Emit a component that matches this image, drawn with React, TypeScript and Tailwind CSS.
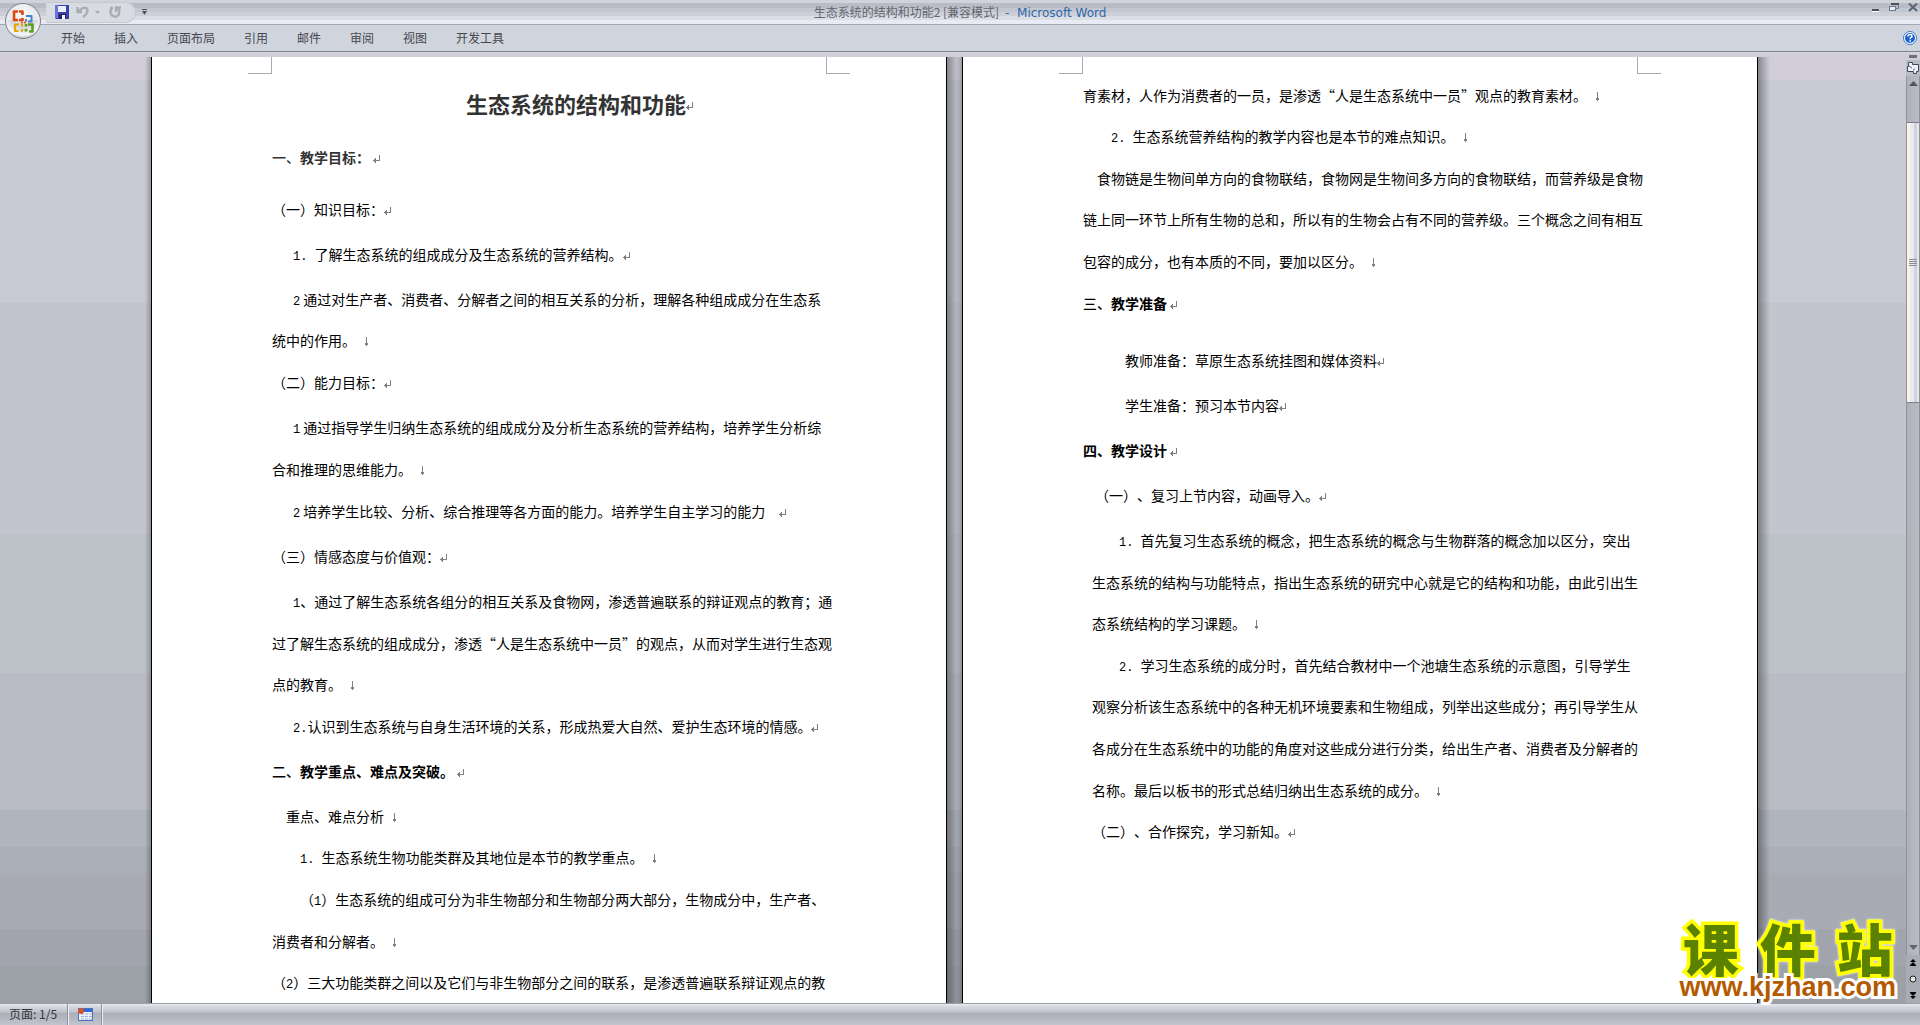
import React from "react";

const cjk = 'font-["Noto_Sans_CJK_SC",sans-serif]';

type Line = {
  text: string;
  lead?: string;
  indent?: string;
  space?: string;
  end?: "para" | "break";
  pad?: string;
  heading?: boolean;
  color?: string;
};

const PARA = "mt-1";
const NEXT = "mt-px";
const WIDE = "mt-3";

const pageOne: Line[] = [
  { lead: "一、", text: "教学目标：", end: "para", pad: "ml-[3px]", heading: true, space: WIDE, color: "text-[#333]" },
  { text: "（一）知识目标：", end: "para", space: "mt-[11px]" },
  { text: "1. 了解生态系统的组成成分及生态系统的营养结构。", indent: "pl-[21px]", end: "para", space: PARA },
  { text: "2通过对生产者、消费者、分解者之间的相互关系的分析，理解各种组成成分在生态系", indent: "pl-[21px]", space: PARA },
  { text: "统中的作用。", end: "break", pad: "ml-[7px]" },
  { text: "（二）能力目标：", end: "para", space: NEXT },
  { text: "1通过指导学生归纳生态系统的组成成分及分析生态系统的营养结构，培养学生分析综", indent: "pl-[21px]", space: PARA },
  { text: "合和推理的思维能力。", end: "break", pad: "ml-[7px]", space: NEXT },
  { text: "2培养学生比较、分析、综合推理等各方面的能力。培养学生自主学习的能力", indent: "pl-[21px]", end: "para", pad: "ml-[14px]", space: NEXT },
  { text: "（三）情感态度与价值观：", end: "para", space: PARA },
  { text: "1、通过了解生态系统各组分的相互关系及食物网，渗透普遍联系的辩证观点的教育；通", indent: "pl-[21px]", space: PARA },
  { text: "过了解生态系统的组成成分，渗透“人是生态系统中一员”的观点，从而对学生进行生态观", space: NEXT },
  { text: "点的教育。", end: "break", pad: "ml-[7px]" },
  { text: "2.认识到生态系统与自身生活环境的关系，形成热爱大自然、爱护生态环境的情感。", indent: "pl-[21px]", end: "para", space: NEXT },
  { lead: "二、", text: "教学重点、难点及突破。", end: "para", pad: "ml-[3px]", heading: true, space: PARA },
  { text: "重点、难点分析", indent: "pl-[14px]", end: "break", pad: "ml-[7px]", space: PARA },
  { text: "1. 生态系统生物功能类群及其地位是本节的教学重点。", indent: "pl-[28px]", end: "break", pad: "ml-[7px]" },
  { text: "（1）生态系统的组成可分为非生物部分和生物部分两大部分，生物成分中，生产者、", indent: "pl-[28px]", space: NEXT },
  { text: "消费者和分解者。", end: "break", pad: "ml-[7px]", space: NEXT },
  { text: "（2）三大功能类群之间以及它们与非生物部分之间的联系，是渗透普遍联系辩证观点的教" },
];

const pageTwo: Line[] = [
  { text: "育素材，人作为消费者的一员，是渗透“人是生态系统中一员”观点的教育素材。", end: "break", pad: "ml-[7px]" },
  { text: "2. 生态系统营养结构的教学内容也是本节的难点知识。", indent: "pl-[28px]", end: "break", pad: "ml-[7px]" },
  { text: "食物链是生物间单方向的食物联结，食物网是生物间多方向的食物联结，而营养级是食物", indent: "pl-[14px]", space: NEXT },
  { text: "链上同一环节上所有生物的总和，所以有的生物会占有不同的营养级。三个概念之间有相互" },
  { text: "包容的成分，也有本质的不同，要加以区分。", end: "break", pad: "ml-[7px]", space: NEXT },
  { lead: "三、", text: "教学准备", end: "para", pad: "ml-[3px]", heading: true, space: NEXT },
  { text: "教师准备：草原生态系统挂图和媒体资料", indent: "pl-[42px]", end: "para", space: "mt-4" },
  { text: "学生准备：预习本节内容", indent: "pl-[42px]", end: "para", space: PARA },
  { text: "四、教学设计", end: "para", pad: "ml-[3px]", heading: true, space: PARA },
  { text: "（一）、复习上节内容，动画导入。", indent: "pl-[12px]", end: "para", space: PARA },
  { text: "1. 首先复习生态系统的概念，把生态系统的概念与生物群落的概念加以区分，突出", indent: "pl-[36px]", space: PARA },
  { text: "生态系统的结构与功能特点，指出生态系统的研究中心就是它的结构和功能，由此引出生", indent: "pl-[9px]", space: NEXT },
  { text: "态系统结构的学习课题。", indent: "pl-[9px]", end: "break", pad: "ml-[7px]" },
  { text: "2. 学习生态系统的成分时，首先结合教材中一个池塘生态系统的示意图，引导学生", indent: "pl-[36px]", space: NEXT },
  { text: "观察分析该生态系统中的各种无机环境要素和生物组成，列举出这些成分；再引导学生从", indent: "pl-[9px]" },
  { text: "各成分在生态系统中的功能的角度对这些成分进行分类，给出生产者、消费者及分解者的", indent: "pl-[9px]", space: NEXT },
  { text: "名称。最后以板书的形式总结归纳出生态系统的成分。", indent: "pl-[9px]", end: "break", pad: "ml-[7px]", space: NEXT },
  { text: "（二）、合作探究，学习新知。", indent: "pl-[9px]", end: "para" },
];

function ParaMark() {
  return (
    <svg width="7" height="8" viewBox="0 0 7 8" className="inline-block shrink-0" aria-hidden="true" shapeRendering="crispEdges">
      <path d="M6.5 0V5.5H1" stroke="#808080" fill="none" />
      <path d="M0 5.5L3 3V8Z" fill="#808080" />
    </svg>
  );
}

function BreakMark() {
  return (
    <svg width="7" height="9" viewBox="0 0 7 9" className="inline-block shrink-0" aria-hidden="true" shapeRendering="crispEdges">
      <path d="M3.5 0V8" stroke="#808080" fill="none" />
      <path d="M1 5.5H6L3.5 9Z" fill="#808080" />
    </svg>
  );
}

/* Latin digits are set in a half-width face; a bare leading digit gets a thin gap before the ideograph. */
function Runs({ text }: { text: string }) {
  const bareDigit = /^[0-9][^0-9.、]/.test(text);
  return (
    <>
      {text.split(/([0-9]\.? ?)/).map((part, i) =>
        /^[0-9]/.test(part) ? (
          <span key={i} className={`font-["Liberation_Mono",monospace] text-xs leading-none ${bareDigit ? "mr-[3px]" : ""}`}>
            {part}
          </span>
        ) : (
          <span key={i}>{part}</span>
        ),
      )}
    </>
  );
}

function TextLine({ line }: { line: Line }) {
  const Tag = line.heading ? "h2" : "p";
  return (
    <Tag
      className={`flex h-[41px] items-center whitespace-pre text-sm [text-spacing-trim:space-all] ${line.heading ? "font-bold" : "font-normal"} ${line.color ?? "text-black"} ${line.indent ?? ""} ${line.space ?? ""}`}
    >
      <span>
        {line.lead && <span className="font-medium">{line.lead}</span>}
        <Runs text={line.text} />
      </span>
      {line.end && (
        <span className={`flex items-center pt-1 ${line.pad ?? ""}`}>{line.end === "para" ? <ParaMark /> : <BreakMark />}</span>
      )}
    </Tag>
  );
}

function Page({ children, top }: { children: React.ReactNode; top: string }) {
  return (
    <article className={`relative w-[796px] shrink-0 border-x border-black bg-white px-[120px] ${top}`}>
      <div className="absolute top-0 right-full mr-px h-full w-[6px] bg-linear-to-l from-black/25 to-transparent" />
      <div className="absolute top-0 left-full ml-px h-full w-[12px] bg-linear-to-r from-black/35 to-transparent" />
      <div className="absolute top-0 left-[96px] h-[17px] w-6 border-r border-b border-[#a9a9b3]" />
      <div className="absolute top-0 right-[96px] h-[17px] w-6 border-b border-l border-[#a9a9b3]" />
      {children}
    </article>
  );
}

function OfficeLogo() {
  return (
    <svg width="38" height="38" viewBox="0 0 38 38" aria-hidden="true">
      <defs>
        <radialGradient id="orb" cx="50%" cy="30%" r="70%">
          <stop offset="0" stopColor="#f4f4f6" />
          <stop offset="0.55" stopColor="#d3d6dc" />
          <stop offset="0.85" stopColor="#f6f7f9" />
          <stop offset="1" stopColor="#b9bcc4" />
        </radialGradient>
      </defs>
      <circle cx="19" cy="19" r="17.5" fill="url(#orb)" stroke="#7d8088" />
      <path d="M3 18a16 16 0 0 1 32 0z" fill="#fff" opacity=".45" />
      <g fill="none" strokeLinejoin="round">
        <path d="M14 9.500H10V18H14M15 9.500H18.500V13M18.500 16V18H15" stroke="#d9480f" strokeWidth="2.600" />
        <path d="M22 14H27.500V19.500H24M22 17V19.500" stroke="#4b7fd0" strokeWidth="2" />
        <path d="M15 22.500H11V29H14.500M18 22V24.500M17 29H18V27" stroke="#e6a700" strokeWidth="2.200" />
        <path d="M24 22.500H28.500V29.500H25M22 29.500V27M22 22V24.500" stroke="#5a9e1f" strokeWidth="2.600" />
      </g>
      <rect x="17" y="19.500" width="2" height="2" fill="#e86a10" />
      <rect x="20" y="19.500" width="2" height="2" fill="#e86a10" />
    </svg>
  );
}

function TitleBar() {
  return (
    <header className="relative flex h-[25px] shrink-0 items-center border-b border-[#a5a8b2] bg-[linear-gradient(#d0d3da_0_3px,#b9bcc5_3px_8px,#c3c7cf_8px_12px,#cdd0d8_12px_16px,#dadde3_16px_20px,#e8ebf3_20px)]">
      <button aria-label="Office" className="absolute top-[2px] left-[4px] z-10">
        <OfficeLogo />
      </button>
      <div className="ml-[46px] flex h-[21px] w-[90px] items-center rounded-r-full rounded-bl-xl border border-[#c6c9d0] border-l-transparent bg-[#d8dbe1] pl-[8px]">
        <button aria-label="保存">
          <svg width="14" height="14" viewBox="0 0 14 14">
            <path d="M0 0H14V14H1L0 13Z" fill="#3a3fae" />
            <path d="M0 0H3V13H0Z" fill="#6d74d8" />
            <rect x="3" y="1" width="8" height="6" fill="#e9effc" />
            <rect x="4" y="9" width="7" height="5" fill="#23265f" />
            <rect x="7" y="10" width="3" height="4" fill="#fff" />
          </svg>
        </button>
        <button aria-label="撤消" className="ml-[7px]">
          <svg width="14" height="12" viewBox="0 0 14 12" fill="none" stroke="#a9adb6" strokeWidth="2.400">
            <path d="M1.500 1V6H6M2 5.500L6 2.500Q11 0.500 11.500 4Q11.500 8 7 11" />
          </svg>
        </button>
        <button aria-label="撤消列表" className="ml-[5px]">
          <svg width="5" height="3" viewBox="0 0 5 3">
            <path d="M0 0H5L2.500 3Z" fill="#a4a8b1" />
          </svg>
        </button>
        <button aria-label="重复" className="ml-[9px]">
          <svg width="13" height="12" viewBox="0 0 13 12" fill="none" stroke="#a9adb6" strokeWidth="2.400">
            <path d="M3 2Q0 6 3 9.500Q7 12 9.500 9Q11.500 5 9 2M7 6V1.500H12M1 2H4" />
          </svg>
        </button>
      </div>
      <button aria-label="自定义快速访问工具栏" className="ml-[6px]">
        <svg width="5" height="6" viewBox="0 0 5 6" fill="#4c4f58">
          <rect width="5" height="1" />
          <path d="M0 2H5L2.500 6Z" />
        </svg>
      </button>
      <h1 className="absolute inset-x-0 text-center text-xs text-[#62656d]">
        <span>生态系统的结构和功能2 [兼容模式]</span>
        <span className='ml-[6px] font-["DejaVu_Sans",sans-serif] text-[#2d68ab]'>-&nbsp; Microsoft Word</span>
      </h1>
      <div className="relative mr-[2px] mb-[9px] ml-auto flex items-end gap-[9px]">
        <button aria-label="最小化">
          <svg width="8" height="8" viewBox="0 0 8 8"><rect y="5" width="7" height="2" fill="#4c4f58" /><rect y="7" width="7" height="1" fill="#fff" /></svg>
        </button>
        <button aria-label="还原">
          <svg width="10" height="9" viewBox="0 0 10 9" fill="none" stroke="#6b7a92"><path d="M2.500 2V0.500H9.500V5.500H7" /><path d="M2 1H10" stroke="#4c4f58" strokeWidth="2" /><rect x=".5" y="3.500" width="6" height="4" fill="#e8ebf3" /></svg>
        </button>
        <button aria-label="关闭">
          <svg width="10" height="9" viewBox="0 0 10 9" stroke="#59657a" strokeWidth="2" fill="none"><path d="M1 0.500L9 8M9 0.500L1 8" /></svg>
        </button>
      </div>
    </header>
  );
}

const tabs = ["开始", "插入", "页面布局", "引用", "邮件", "审阅", "视图", "开发工具"];

function Ribbon() {
  return (
    <nav className="flex h-[32px] shrink-0 flex-col">
      <div className="flex h-[27px] items-center gap-[29px] border-b border-[#7d8088] bg-[#d0d4dc] pr-[3px] pl-[61px] text-xs text-[#45484f]">
        {tabs.map((t) => (
          <button key={t}>{t}</button>
        ))}
        <button aria-label="帮助" className="ml-auto">
          <svg width="14" height="14" viewBox="0 0 14 14">
            <circle cx="7" cy="7" r="6.500" fill="#fff" stroke="#3b7ac4" />
            <circle cx="7" cy="7" r="5" fill="#1a5fd0" />
            <path d="M5 5.500Q5 3.500 7 3.500Q9 3.500 9 5.200Q9 6.200 7.200 7.200V8.200" stroke="#fff" strokeWidth="1.500" fill="none" />
            <rect x="6.400" y="9.200" width="1.600" height="1.500" fill="#fff" />
          </svg>
        </button>
      </div>
      <div className="flex-1 border-t border-[#d3dbe0] bg-[#d1ced9]" />
    </nav>
  );
}

function ScrollBar() {
  return (
    <aside className="relative z-10 -mt-1 flex w-[14px] shrink-0 flex-col items-stretch bg-[#b0b3ba]">
      <button aria-label="拆分" className="flex h-[7px] items-center justify-center bg-[#d1ced9]">
        <span className="h-[3px] w-2 bg-[#6f717a]" />
      </button>
      <button aria-label="标尺" className="flex h-4 items-center justify-center bg-[#b9bcc5]">
        <svg width="12" height="12" viewBox="0 0 12 12" fill="#f1effa" stroke="#3b4a63">
          <path d="M1.500 0.500H5.500V2.500H11.500V9.500H9.500V11.500H6.500V9.500H0.500V4.500H1.500Z" />
          <path d="M2 4L5 6M6 8L8 7" strokeWidth=".8" />
        </svg>
      </button>
      <div className="flex flex-1 flex-col border-x border-[#8f929a] bg-[linear-gradient(90deg,#aeb1b8,#b8bbc2)]">
        <button aria-label="向上滚动" className="flex h-[46px] justify-center pt-[5px]">
          <svg width="9" height="5" viewBox="0 0 9 5"><path d="M0 5L4.500 0L9 5Z" fill="#50535b" /></svg>
        </button>
        <div className="flex h-[281px] flex-col items-center justify-center gap-px border-y border-[#7d8088] bg-[linear-gradient(90deg,#fdf3e4_0_3px,#e9e9f1_3px_7px,#d0d3dd_7px_10px,#e6e8ee_10px)]">
          <span className="h-px w-2 bg-[#8a8d95]" />
          <span className="h-px w-2 bg-[#8a8d95]" />
          <span className="h-px w-2 bg-[#8a8d95]" />
          <span className="h-px w-2 bg-[#8a8d95]" />
        </div>
        <button aria-label="向下滚动" className="mt-auto flex h-[10px] justify-center">
          <svg width="9" height="5" viewBox="0 0 9 5"><path d="M0 0H9L4.500 5Z" fill="#60646e" /></svg>
        </button>
      </div>
      <div className="flex h-[48px] flex-col items-center justify-around bg-[#a9acb4]">
        <button aria-label="前一页">
          <svg width="6" height="7" viewBox="0 0 6 7"><path d="M3 0L6 3H0ZM3 3L6 6H0Z" /><rect y="6" width="6" height="1" /></svg>
        </button>
        <button aria-label="选择浏览对象">
          <svg width="8" height="8" viewBox="0 0 8 8"><circle cx="4" cy="4" r="3" fill="#e4e4e0" stroke="#222" /></svg>
        </button>
        <button aria-label="下一页">
          <svg width="6" height="7" viewBox="0 0 6 7"><rect width="6" height="1" /><path d="M0 1H6L3 4ZM0 4H6L3 7Z" /></svg>
        </button>
      </div>
    </aside>
  );
}

function Watermark() {
  return (
    <div className="absolute right-[24px] bottom-[26px] z-20 flex flex-col items-center">
      <div className="flex gap-[21px] text-[56px] leading-[56px] font-black text-[#5a8200] [paint-order:stroke_fill] [-webkit-text-stroke:7px_#ffff00] [filter:drop-shadow(0_0_1px_#fff)]">
        <span>课</span>
        <span>件</span>
        <span>站</span>
      </div>
      <a
        href="#kjzhan"
        className='relative font-["Liberation_Sans",sans-serif] text-[27px] leading-[24px] font-bold text-[#b35a00] [paint-order:stroke_fill] [-webkit-text-stroke:6px_#fff]'
      >
        www.kjzhan.com
      </a>
    </div>
  );
}

function StatusBar() {
  return (
    <footer className="flex h-[22px] shrink-0 items-stretch border-t border-[#9da0a9] bg-[linear-gradient(#e3e5ea_0_1px,#d3d6dd_3px,#c0c3cb_8px,#acafb7_9px,#b4b7bf_14px,#c2c5ce)] text-xs text-[#33353b]">
      <button className="flex w-[68px] items-center border-r border-[#8f929a] pb-px pl-[9px]">页面: 1/5</button>
      <button aria-label="宏录制" className="flex w-[34px] items-center justify-center border-r border-l border-r-[#8f929a] border-l-[#eceef2] pb-px">
        <svg width="15" height="13" viewBox="0 0 15 13">
          <rect x=".5" y=".5" width="14" height="12" fill="#eef3fd" stroke="#4a72b8" />
          <rect x="1" y="1" width="13" height="3" fill="#2f68d8" />
          <path d="M3 6H6M7 6H10M11 6H14M3 8.500H6M7 8.500H10M11 8.500H14M3 11H6M7 11H10M11 11H14" stroke="#9db3dc" />
          <circle cx="3" cy="3" r="3" fill="#d9532c" />
        </svg>
      </button>
      <div className="flex-1 border-l border-[#eceef2]" />
    </footer>
  );
}

export default function App() {
  return (
    <div lang="zh-CN" className={`relative flex h-screen flex-col overflow-hidden bg-[#d0d4dc] ${cjk}`}>
      <TitleBar />
      <Ribbon />
      <div className="flex min-h-0 flex-1">
        <main className="flex min-w-0 flex-1 justify-center gap-[15px] overflow-hidden bg-[linear-gradient(#d1ced9_0_23px,#c7cad2_23px_246px,#c2c5cd_246px_477px,#bdc2c9_477px_616px,#b9bcc4_616px_753px,#b0b5bd_753px_790px,#abafb7_790px_816px,#a8abb3_816px_872px,#a1a4ac_872px_909px,#9ca1a8_909px)] pl-[3px]">
          <Page top="pt-[26px]">
            <h1 className="flex h-[41px] items-center pl-[194px] text-[22px] font-bold whitespace-nowrap text-[#333]">
              <span>生态系统的结构和功能</span>
              <span className="flex items-center pt-1">
                <ParaMark />
              </span>
            </h1>
            {pageOne.map((l) => (
              <TextLine key={l.text} line={l} />
            ))}
          </Page>
          <Page top="pt-[17px]">
            {pageTwo.map((l) => (
              <TextLine key={l.text} line={l} />
            ))}
          </Page>
        </main>
        <ScrollBar />
      </div>
      <StatusBar />
      <Watermark />
    </div>
  );
}
